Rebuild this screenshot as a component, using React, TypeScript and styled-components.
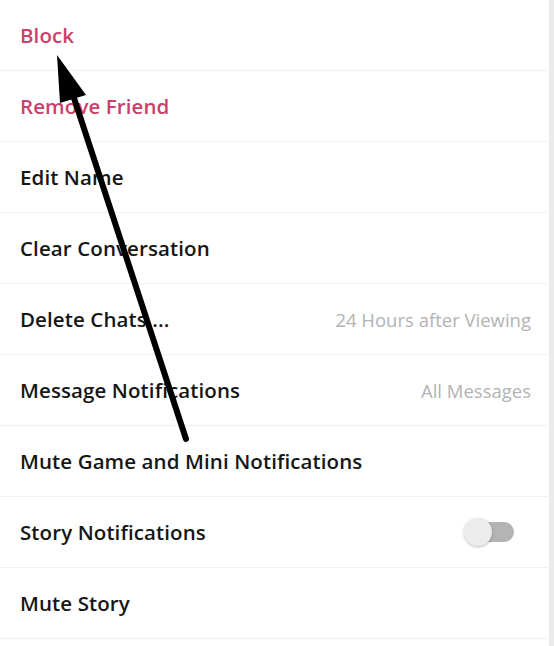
import React from "react";
import styled, { createGlobalStyle } from "styled-components";

const GlobalStyle = createGlobalStyle`
  html, body {
    margin: 0;
    padding: 0;
    background: #ffffff;
  }
  body {
    font-family: "Open Sans", "Noto Sans", "Liberation Sans", sans-serif;
  }
`;

const Page = styled.div`
  position: relative;
  display: flex;
  width: 554px;
  height: 646px;
  overflow: hidden;
  background: #ffffff;
`;

const List = styled.div`
  flex: 1;
  display: flex;
  flex-direction: column;
`;

const Track = styled.div`
  width: 5px;
  margin-left: 1px;
  background: #ebebeb;
`;

const Row = styled.div`
  display: flex;
  align-items: center;
  justify-content: space-between;
  height: 70px;
  padding: 0 17px 0 20px;
  border-bottom: 1px solid #f1f1f1;
  flex-shrink: 0;
`;

interface LabelProps {
  danger?: boolean;
}

const Label = styled.span<LabelProps>`
  font-size: 20.5px;
  font-weight: 600;
  letter-spacing: 0.1px;
  color: ${(p) => (p.danger ? "#c9416a" : "#161616")};
`;

const Value = styled.span`
  font-size: 18.5px;
  font-weight: 400;
  color: #b3b3b3;
`;

const Switch = styled.div`
  position: relative;
  width: 50px;
  height: 30px;
  margin-right: 17px;
`;

const SwitchTrack = styled.div`
  position: absolute;
  left: 14px;
  right: 0;
  top: 5px;
  height: 20px;
  border-radius: 10px;
  background: #b4b4b4;
`;

const SwitchKnob = styled.div`
  position: absolute;
  left: 0;
  top: 1px;
  width: 28px;
  height: 28px;
  border-radius: 50%;
  background: #ececec;
  box-shadow: 0 1px 3px rgba(0, 0, 0, 0.25);
`;

const Overlay = styled.svg`
  position: absolute;
  left: 0;
  top: 0;
  pointer-events: none;
`;

const items = [
  { label: "Block", danger: true },
  { label: "Remove Friend", danger: true },
  { label: "Edit Name" },
  { label: "Clear Conversation" },
  { label: "Delete Chats ...", value: "24 Hours after Viewing" },
  { label: "Message Notifications", value: "All Messages" },
  { label: "Mute Game and Mini Notifications" },
  { label: "Story Notifications", toggle: true },
  { label: "Mute Story" },
];

function App(): JSX.Element {
  return (
    <Page>
      <GlobalStyle />
      <List>
        {items.map((item) => (
          <Row key={item.label}>
            <Label danger={item.danger}>{item.label}</Label>
            {item.value && <Value>{item.value}</Value>}
            {item.toggle && (
              <Switch>
                <SwitchTrack />
                <SwitchKnob />
              </Switch>
            )}
          </Row>
        ))}
      </List>
      <Track />
      <Overlay width="554" height="646" viewBox="0 0 554 646">
        <line
          x1="186"
          y1="439"
          x2="72"
          y2="92"
          stroke="#000"
          strokeWidth="6"
          strokeLinecap="round"
        />
        <polygon points="57,55 60,103 86,95" fill="#000" />
      </Overlay>
    </Page>
  );
}

export default App;
